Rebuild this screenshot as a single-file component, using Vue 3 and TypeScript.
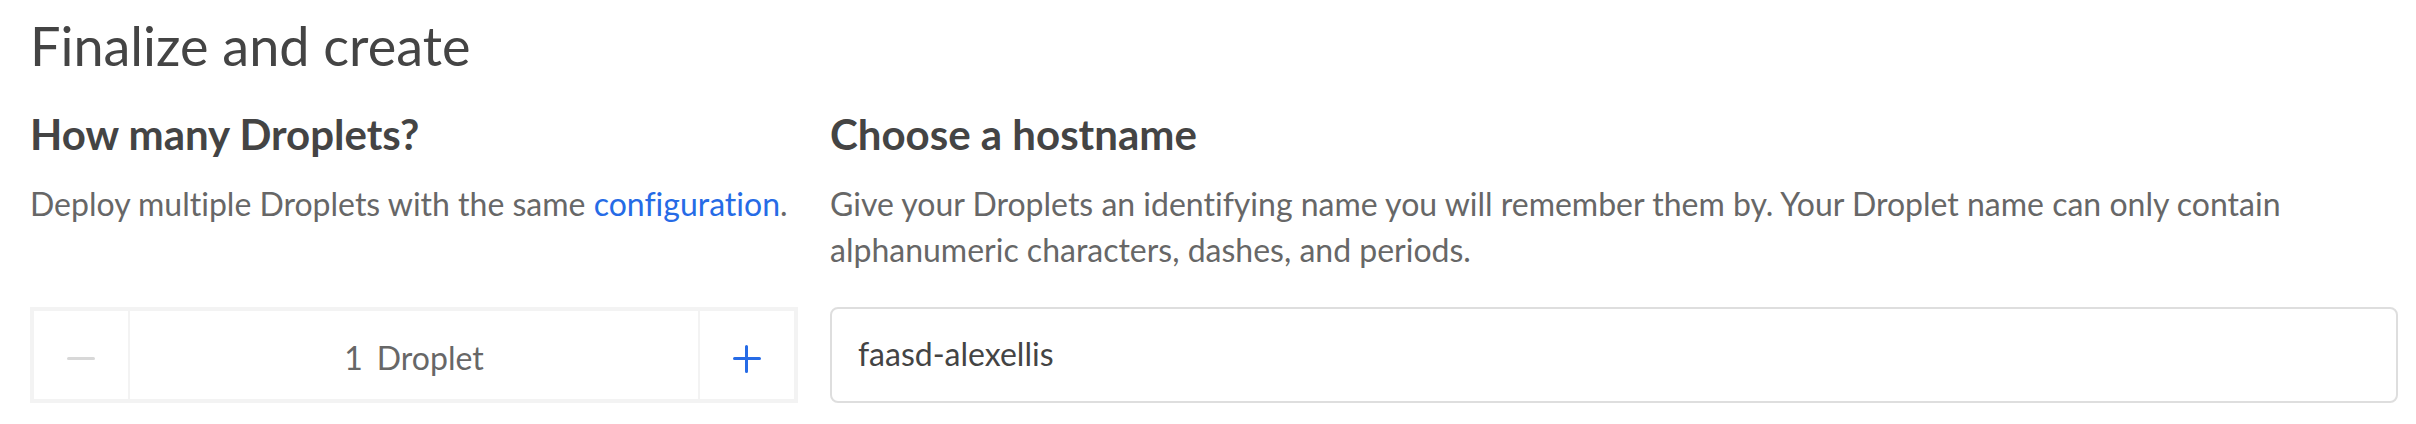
<script setup lang="ts">
import { computed, ref } from 'vue'

const count = ref(1)
const hostname = ref('faasd-alexellis')
const unit = computed(() => (count.value === 1 ? 'Droplet' : 'Droplets'))
</script>

<template>
  <main class="finalize">
    <h1 class="title">Finalize and create</h1>
    <div class="columns">
      <section class="column">
        <h2 class="heading">How many Droplets?</h2>
        <p class="description">
          Deploy multiple Droplets with the same <a class="link" href="#configuration">configuration</a>.
        </p>
        <div class="stepper" role="group" aria-label="Number of Droplets">
          <button class="step minus" type="button" aria-label="Remove a Droplet" :disabled="count <= 1" @click="count--">
            <svg class="icon" viewBox="0 0 28 28" aria-hidden="true"><path d="M1.5 13.5h25" /></svg>
          </button>
          <output class="amount"><span>{{ count }}</span><span>{{ unit }}</span></output>
          <button class="step plus" type="button" aria-label="Add a Droplet" @click="count++">
            <svg class="icon" viewBox="0 0 28 28" aria-hidden="true"><path d="M1.5 13.5h25M13.5 1.5v25" /></svg>
          </button>
        </div>
      </section>
      <section class="column">
        <h2 class="heading"><label for="hostname">Choose a hostname</label></h2>
        <p class="description">
          Give your Droplets an identifying name you will remember them by. Your Droplet name can only contain
          alphanumeric characters, dashes, and periods.
        </p>
        <input id="hostname" v-model="hostname" class="hostname" type="text" autocomplete="off" spellcheck="false" />
      </section>
    </div>
  </main>
</template>

<style>
body {
  margin: 0;
  background: #fff;
}
</style>

<style scoped>
.finalize {
  padding: 14px 18px 20px 30px;
  color: #444;
  font-family: Lato, "Liberation Sans", sans-serif;
  font-variant-ligatures: none;
}

.title {
  margin: 0 0 26px;
  font-size: 54px;
  font-weight: 400;
  line-height: 64px;
}

.columns {
  display: grid;
  grid-template-columns: 24fr 49fr;
  gap: 32px;
}

.column {
  display: flex;
  flex-direction: column;
}

.heading {
  margin: 0 0 17px;
  font-size: 42px;
  font-weight: 700;
  line-height: 60px;
}

.description {
  margin: 0 0 34px;
  color: #676767;
  font-size: 32px;
  line-height: 46px;
}

.link {
  color: #266be6;
  text-decoration: none;
}

.stepper {
  display: flex;
  box-sizing: border-box;
  height: 96px;
  margin-top: auto;
  border: 4px solid #f3f3f3;
}

.step {
  display: flex;
  flex: 0 0 96px;
  align-items: center;
  justify-content: center;
  box-sizing: border-box;
  padding: 8px 0 0;
  border: 0 solid #f3f3f3;
  background: transparent;
  color: #266be6;
  cursor: pointer;
}

.step:disabled {
  color: #d8d8d8;
  cursor: default;
}

.minus {
  border-right-width: 2px;
}

.plus {
  border-left-width: 2px;
}

.icon {
  width: 28px;
  height: 28px;
  fill: none;
  stroke: currentColor;
  stroke-linecap: round;
  stroke-width: 3;
}

.amount {
  display: flex;
  flex: 1;
  align-items: center;
  justify-content: center;
  gap: 14px;
  padding-top: 4px;
  color: #676767;
  font-size: 32px;
}

.hostname {
  box-sizing: border-box;
  width: 100%;
  height: 96px;
  padding: 0 26px 4px;
  border: 2px solid #dedede;
  border-radius: 8px;
  background: #fff;
  color: #444;
  font: inherit;
  font-size: 32px;
}
</style>
